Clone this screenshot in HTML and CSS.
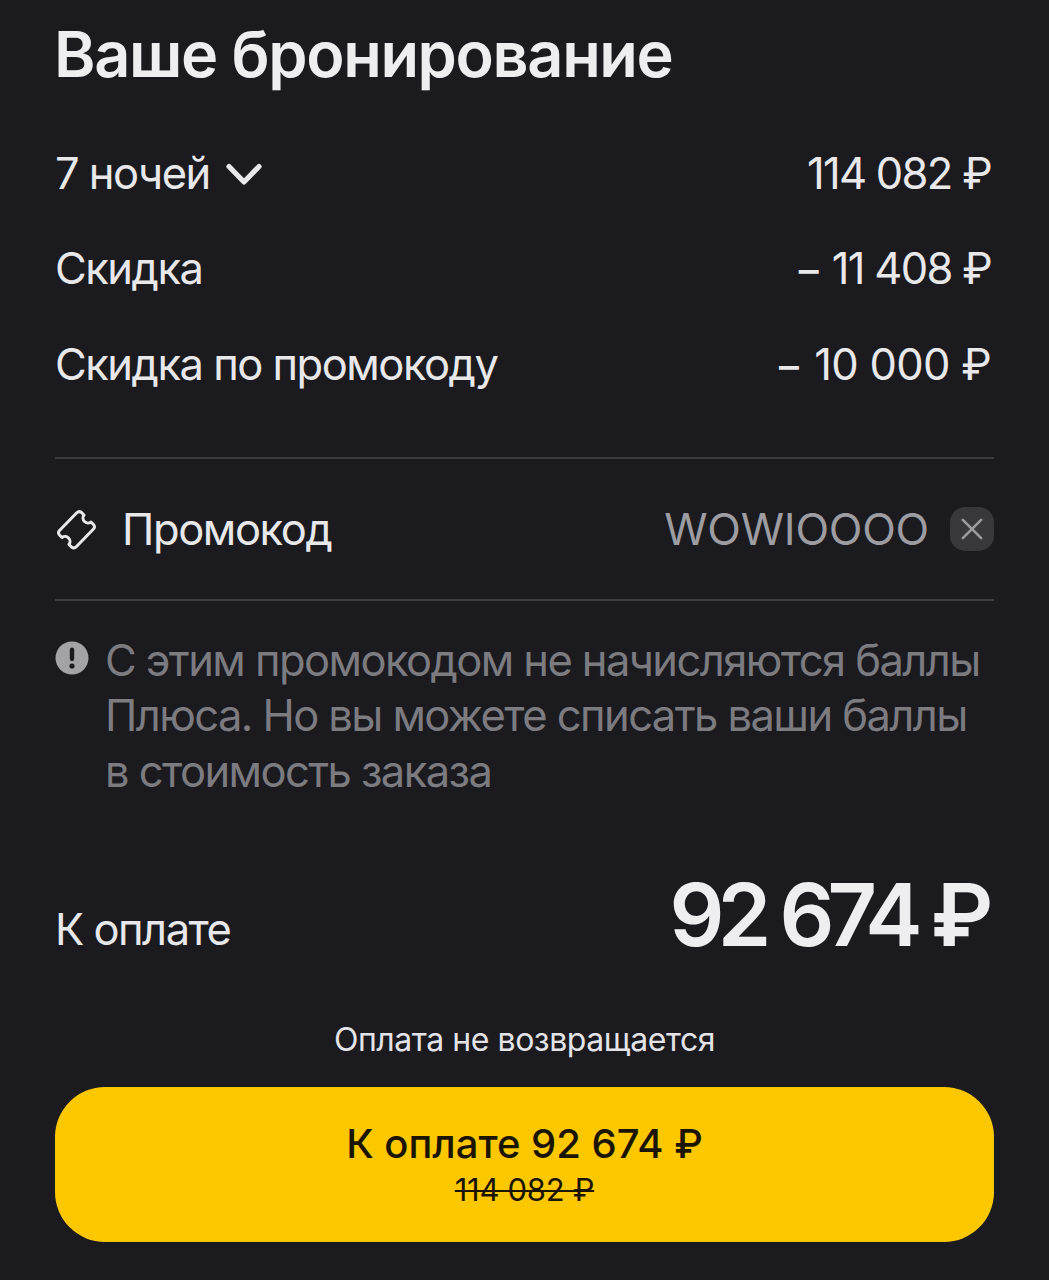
FILE: index.html
```html
<!DOCTYPE html>
<html lang="ru">
<head>
<meta charset="utf-8">
<title>Ваше бронирование</title>
<link rel="stylesheet" href="styles.css">
</head>
<body>
<main class="sheet">
  <h1 class="title">Ваше бронирование</h1>
  <section class="prices">
    <div class="row">
      <span class="nights">7 ночей
        <svg class="chevron" viewBox="0 0 36 24" width="36" height="24"><path d="M3 4.500 18 20 33 4.500" fill="none" stroke="currentColor" stroke-width="5.200" stroke-linecap="round" stroke-linejoin="round"/></svg>
      </span>
      <span class="amount">114 082 ₽</span>
    </div>
    <div class="row"><span>Скидка</span><span class="amount">− 11 408 ₽</span></div>
    <div class="row"><span>Скидка по промокоду</span><span class="amount amount-wide">− 10 000 ₽</span></div>
  </section>
  <section class="promo">
    <span class="promo-label">
      <svg class="ticket" viewBox="0 0 44 44" width="44" height="44"><path d="M21.500 6Q24 3.500 26.500 5.500L29 8A5 5 0 0 0 36 15L38.500 17.500Q40.500 20 38.500 22L21.500 39.500Q19 42 16.500 40L14 37.500A5 5 0 0 0 7 30.500L4.500 28Q2.500 25.500 4.500 23.500Z" fill="none" stroke="currentColor" stroke-width="3" stroke-linejoin="round"/></svg>
      Промокод
    </span>
    <span class="promo-value">
      <span class="promo-code">WOWIOOOO</span>
      <span class="clear"><svg viewBox="0 0 24 24" width="24" height="24"><path d="M2 2 22 22M22 2 2 22" stroke="currentColor" stroke-width="2.800" stroke-linecap="round"/></svg></span>
    </span>
  </section>
  <section class="notice">
    <svg class="alert" viewBox="0 0 34 34" width="34" height="34"><circle cx="17" cy="17" r="16.500" fill="#a2a2a7"/><rect x="14.800" y="6.500" width="4.400" height="13.500" rx="2.200" fill="#1a1a20"/><circle cx="17" cy="25" r="2.600" fill="#1a1a20"/></svg>
    <p class="notice-text">С этим промокодом не начисляются баллы Плюса. Но вы можете списать ваши баллы в стоимость заказа</p>
  </section>
  <section class="total">
    <span class="total-label">К оплате</span>
    <span class="total-sum">92 674 ₽</span>
  </section>
  <p class="refund">Оплата не возвращается</p>
  <button class="pay" type="button">
    <span class="pay-main">К оплате 92 674 ₽</span>
    <span class="pay-old">114 082 ₽</span>
  </button>
</main>
</body>
</html>
```
FILE: styles.css
```css
* { box-sizing: border-box; }
html, body { margin: 0; height: 100%; }
body {
  background: #1a1a1f;
  color: #eeeef0;
  font-family: Inter, "Noto Sans", "Liberation Sans", sans-serif;
  overflow: hidden;
}
.sheet {
  width: 1049px;
  height: 1280px;
  padding: 0 55px;
  display: flex;
  flex-direction: column;
}
.title {
  margin: 18px 0 0;
  font-size: 63px;
  line-height: 72px;
  font-weight: 600;
  letter-spacing: -1.350px;
  margin-left: -1px;
}
.prices {
  margin-top: 35px;
  display: flex;
  flex-direction: column;
  padding-bottom: 45px;
  border-bottom: 2px solid #3a3a40;
}
.row {
  display: flex;
  justify-content: space-between;
  align-items: center;
  height: 95.500px;
  font-size: 43.500px;
  letter-spacing: -1.500px;
  color: #e8e8eb;
}
.amount { letter-spacing: -1.700px; padding-right: 3px; }
.amount-wide { letter-spacing: -0.700px; }
.nights { display: flex; align-items: center; gap: 16px; }
.chevron { margin-top: 2px; }
.promo {
  height: 142px;
  display: flex;
  justify-content: space-between;
  align-items: center;
  border-bottom: 2px solid #3a3a40;
}
.promo-label {
  display: flex;
  align-items: center;
  gap: 23px;
  font-size: 43.500px;
  letter-spacing: -1.400px;
  color: #e8e8eb;
}
.promo-value { display: flex; align-items: center; gap: 21px; }
.promo-code { font-size: 44px; letter-spacing: -0.250px; color: #9c9ca1; }
.clear {
  width: 44px;
  height: 44px;
  border-radius: 15px;
  background: #37373c;
  color: #9c9ca1;
  display: flex;
  align-items: center;
  justify-content: center;
}
.clear svg { width: 22px; height: 22px; }
.notice {
  margin-top: 32px;
  display: flex;
  gap: 16px;
  align-items: flex-start;
}
.alert { flex: none; margin-top: 8px; }
.notice-text {
  margin: 0;
  font-size: 43.500px;
  line-height: 55.500px;
  letter-spacing: -1.580px;
  color: #7b7b80;
}
.total {
  margin-top: 68px;
  display: flex;
  justify-content: space-between;
  align-items: flex-end;
}
.total-label {
  margin-bottom: 9px;
  font-size: 43.500px;
  letter-spacing: -1.500px;
  line-height: 50px;
  color: #e8e8eb;
}
.total-sum {
  font-size: 86px;
  line-height: 96px;
  font-weight: 600;
  letter-spacing: -6.800px;
  padding-right: 7.500px;
}
.refund {
  margin: 57px 0 0;
  text-align: center;
  font-size: 32px;
  line-height: 40px;
  letter-spacing: -0.450px;
  color: #e4e4e8;
}
.pay {
  margin-top: 27px;
  height: 155px;
  border: 0;
  padding: 0;
  border-radius: 50px;
  background: #fbc800;
  color: #1a1400;
  font-family: inherit;
  display: flex;
  flex-direction: column;
  align-items: center;
  justify-content: center;
}
.pay-main { font-size: 40px; line-height: 50px; font-weight: 500; }
.pay-old {
  font-size: 31px;
  line-height: 42px;
  letter-spacing: -0.300px;
  text-decoration: line-through;
  text-decoration-thickness: 2px;
}
```
